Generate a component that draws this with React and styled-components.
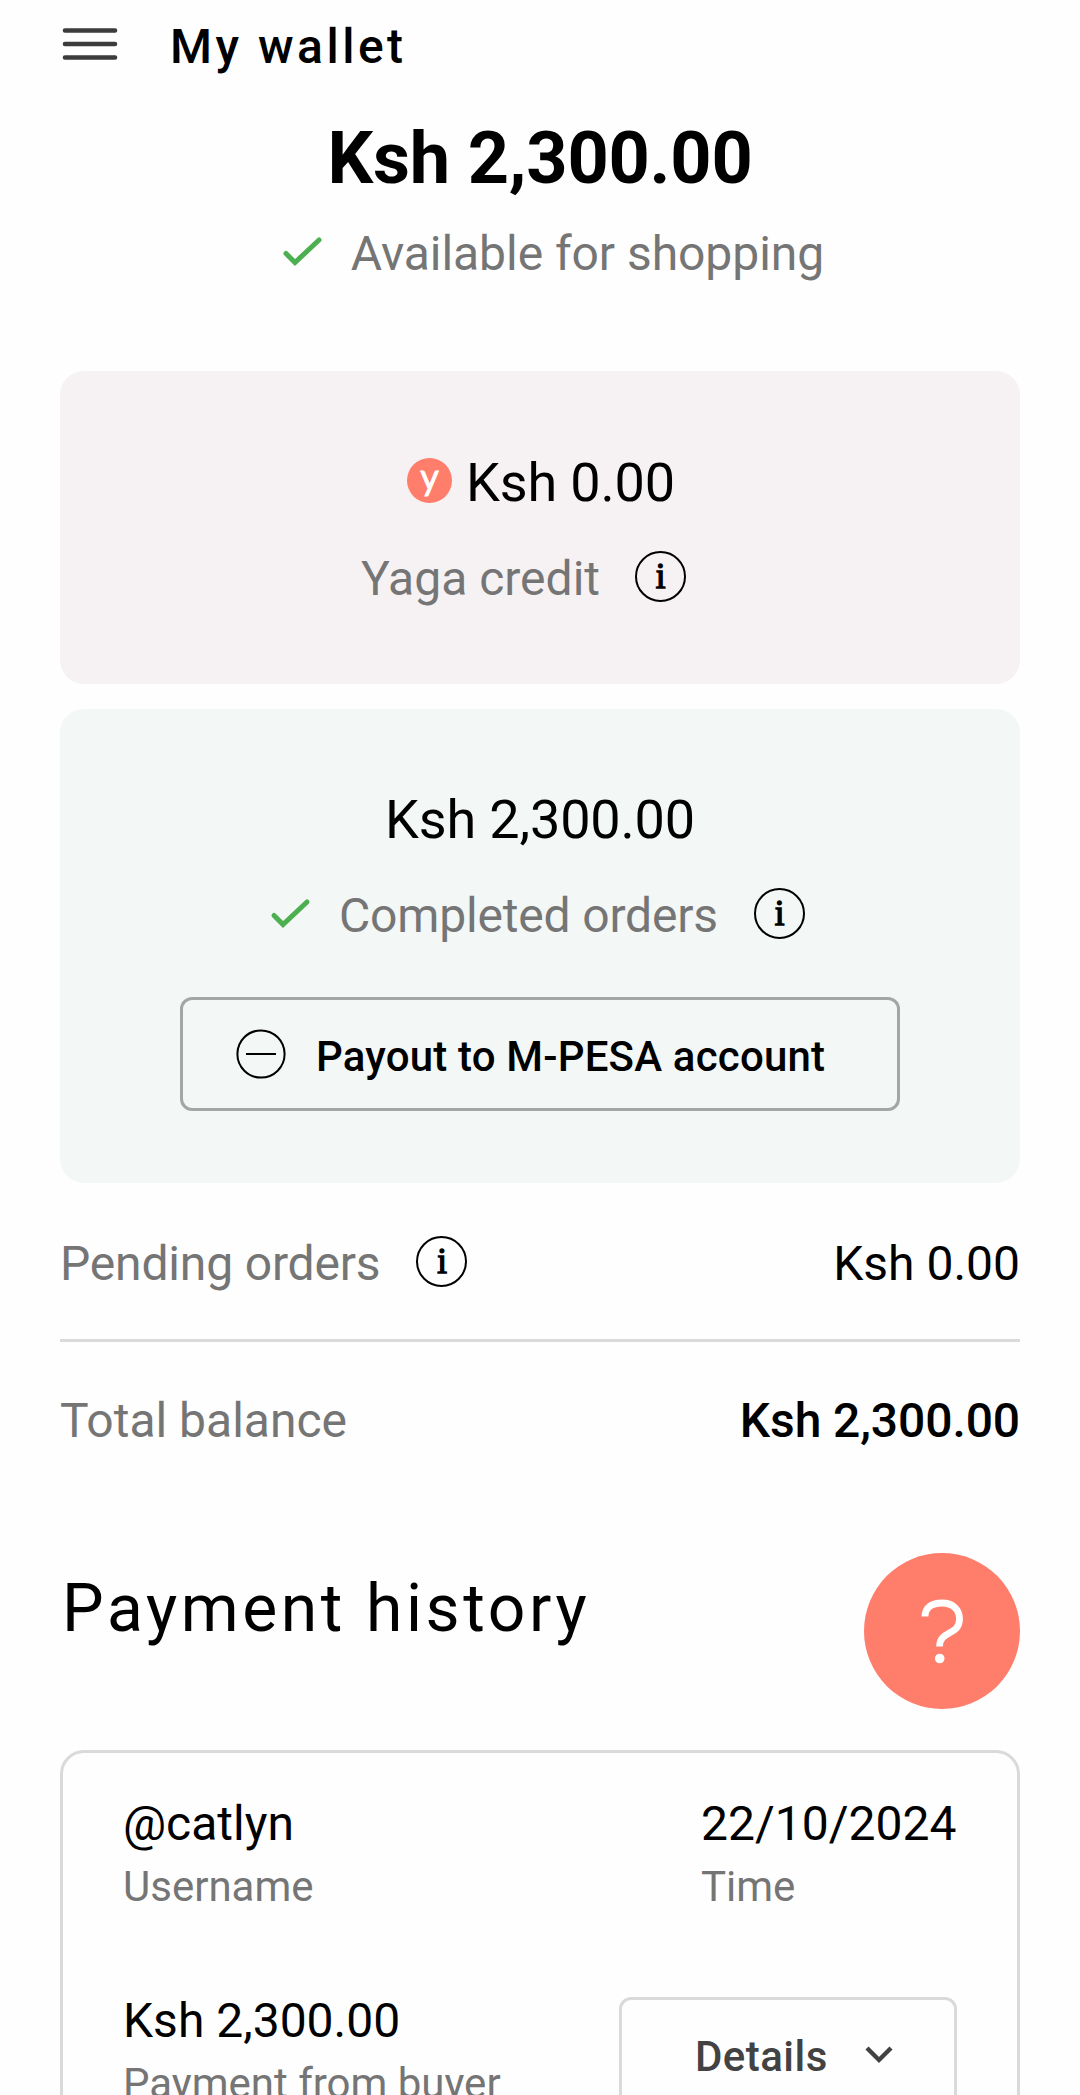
import React from "react";
import styled, { createGlobalStyle } from "styled-components";

const GlobalStyle = createGlobalStyle`
  * {
    box-sizing: border-box;
  }
  body {
    margin: 0;
    background: #fefefe;
    color: #000;
    font-family: Roboto, sans-serif;
    font-size: 48px;
    line-height: 72px;
  }
`;

const Page = styled.div`
  position: relative;
  width: 1080px;
  height: 2095px;
  padding: 11px 60px 0;
  overflow: hidden;
`;

const Header = styled.header`
  display: flex;
  align-items: center;
  height: 72px;
`;

const MenuButton = styled.button`
  display: flex;
  padding: 0;
  margin: -6px 50px 0 0;
  border: 0;
  background: none;
`;

const Title = styled.h1`
  margin: 0;
  font-size: 48px;
  font-weight: 500;
  letter-spacing: 3.5px;
`;

const Summary = styled.section`
  display: flex;
  flex-direction: column;
  align-items: center;
  margin: 28px 0 81px;
`;

const Balance = styled.div`
  margin-bottom: 11px;
  font-size: 72px;
  font-weight: 700;
  line-height: 96px;
  letter-spacing: -0.2px;
`;

const Label = styled.div`
  display: flex;
  align-items: center;
  color: #757575;
  letter-spacing: ${(props) => props.$spacing || "0"};
  white-space: nowrap;
`;

const Card = styled.section`
  display: flex;
  flex-direction: column;
  align-items: center;
  height: ${(props) => props.$height};
  margin-bottom: 25px;
  padding-top: ${(props) => props.$top};
  border-radius: 24px;
  background: ${(props) => props.$color};
`;

const Amount = styled.div`
  display: flex;
  align-items: center;
  gap: 14px;
  margin-bottom: 24px;
  font-size: 54px;
  letter-spacing: -0.15px;
`;

const Logo = styled.span`
  display: flex;
  justify-content: center;
  width: 45px;
  height: 45px;
  margin: -5px 0 0 2px;
  border-radius: 50%;
  background: #ff7d6b;
  color: #fff;
  font-family: Lato, sans-serif;
  font-size: 36px;
  line-height: 36px;
  -webkit-text-stroke: 0.8px #fff;
`;

const InfoCircle = styled.span`
  display: flex;
  justify-content: center;
  width: 51px;
  height: 51px;
  margin: ${(props) => (props.$wide ? "-6px 31px 0 36px" : "-6px 33px 0 35px")};
  border: 2px solid #000;
  border-radius: 50%;
  color: #000;
  font-family: "Liberation Serif", serif;
  font-size: 35px;
  line-height: 47px;
  -webkit-text-stroke: 1.4px #000;
`;

const CheckSvg = styled.svg`
  width: 50px;
  height: 50px;
  margin: -6px 25px 0 20px;
`;

const PayoutButton = styled.button`
  display: flex;
  align-items: center;
  gap: 30px;
  width: 720px;
  height: 114px;
  margin-top: 45px;
  padding: 0 0 0 53px;
  border: 3px solid #a2a7a5;
  border-radius: 12px;
  background: none;
  color: #000;
  font: 500 42px/54px Roboto, sans-serif;
  letter-spacing: 0.18px;

  span {
    padding-top: 5px;
  }
`;

const Row = styled.div`
  display: flex;
  justify-content: space-between;
  height: 72px;
`;

const Value = styled.div`
  font-weight: ${(props) => (props.$strong ? 500 : 400)};
  letter-spacing: ${(props) => (props.$strong ? "-0.1px" : "0")};
`;

const Balances = styled.section`
  padding-top: 20px;
`;

const Divider = styled.hr`
  height: 3px;
  margin: 39px 0 43px;
  border: 0;
  background: #dadada;
`;

const Heading = styled.h2`
  margin: 110px 0 99px 2px;
  font-size: 66px;
  font-weight: 400;
  line-height: 84px;
  letter-spacing: 3.6px;
`;

const Payment = styled.article`
  display: grid;
  grid-template-columns: 1fr 256px;
  row-gap: 71px;
  height: 520px;
  padding: 38px 60px;
  align-content: start;
  border: 3px solid #dadada;
  border-radius: 24px;
`;

const Field = styled.div`
  line-height: 66px;
  white-space: nowrap;

  small {
    display: block;
    color: #757575;
    font-size: 42px;
    line-height: 60px;
  }
`;

const DetailsButton = styled.button`
  display: flex;
  align-items: center;
  justify-self: end;
  gap: 37px;
  width: 338px;
  height: 114px;
  margin-top: 9px;
  padding: 0 0 0 73px;
  border: 3px solid #dadada;
  border-radius: 12px;
  background: none;
  color: #424242;
  font: 500 42px/54px Roboto, sans-serif;
  letter-spacing: 0.45px;

  span {
    padding-top: 5px;
  }
`;

const HelpButton = styled.button`
  position: absolute;
  top: 1553px;
  right: 60px;
  width: 156px;
  height: 156px;
  padding: 0;
  border: 0;
  border-radius: 50%;
  background: #ff7d6b;
`;

const Check = () => (
  <CheckSvg viewBox="0 0 50 50" fill="none" stroke="#4caf50" strokeWidth="5" strokeLinecap="round">
    <path d="M10 27.5 19 36.5 43 14" />
  </CheckSvg>
);

const Info = ({ wide }) => <InfoCircle $wide={wide}>i</InfoCircle>;

const MenuIcon = () => (
  <svg width="60" height="40" stroke="#3c3c3c" strokeWidth="4.6" strokeLinecap="round">
    <path d="M5 6.5H55M5 20H55M5 33.5H55" />
  </svg>
);

const MinusIcon = () => (
  <svg width="50" height="50" fill="none" stroke="#000" strokeWidth="2">
    <circle cx="25" cy="25" r="23.6" />
    <path d="M10 25H40" />
  </svg>
);

const ChevronIcon = () => (
  <svg width="28" height="20" fill="none" stroke="#424242" strokeWidth="4.4">
    <path d="M2 4 14 16 26 4" />
  </svg>
);

const QuestionIcon = () => (
  <svg width="156" height="156" fill="none" stroke="#fff" strokeWidth="6.8">
    <path d="M61 63.5C61 54 68 50 78 50C89 50 95.5 56.5 95.5 66C95.5 83 75.5 77 75.5 93.5" />
    <circle cx="75.7" cy="105.5" r="4.8" fill="#fff" stroke="none" />
  </svg>
);

const App = () => {
  return (
    <Page>
      <GlobalStyle />
      <Header>
        <MenuButton aria-label="Menu">
          <MenuIcon />
        </MenuButton>
        <Title>My wallet</Title>
      </Header>
      <Summary>
        <Balance>Ksh 2,300.00</Balance>
        <Label $spacing="-0.05px">
          <Check />
          Available for shopping
        </Label>
      </Summary>
      <Card $color="#f6f2f3" $height="313px" $top="76px">
        <Amount>
          <Logo>y</Logo>
          Ksh 0.00
        </Amount>
        <Label>
          Yaga credit
          <Info />
        </Label>
      </Card>
      <Card $color="#f3f7f6" $height="474px" $top="75px">
        <Amount>Ksh 2,300.00</Amount>
        <Label $spacing="-0.17px">
          <Check />
          Completed orders
          <Info wide />
        </Label>
        <PayoutButton>
          <MinusIcon />
          <span>Payout to M-PESA account</span>
        </PayoutButton>
      </Card>
      <Balances>
        <Row>
          <Label $spacing="-0.17px">
            Pending orders
            <Info wide />
          </Label>
          <Value>Ksh 0.00</Value>
        </Row>
        <Divider />
        <Row>
          <Label>Total balance</Label>
          <Value $strong>Ksh 2,300.00</Value>
        </Row>
      </Balances>
      <Heading>Payment history</Heading>
      <Payment>
        <Field>
          @catlyn
          <small>Username</small>
        </Field>
        <Field>
          22/10/2024
          <small>Time</small>
        </Field>
        <Field>
          Ksh 2,300.00
          <small>Payment from buyer</small>
        </Field>
        <DetailsButton>
          <span>Details</span>
          <ChevronIcon />
        </DetailsButton>
      </Payment>
      <HelpButton aria-label="Help">
        <QuestionIcon />
      </HelpButton>
    </Page>
  );
};

export default App;
